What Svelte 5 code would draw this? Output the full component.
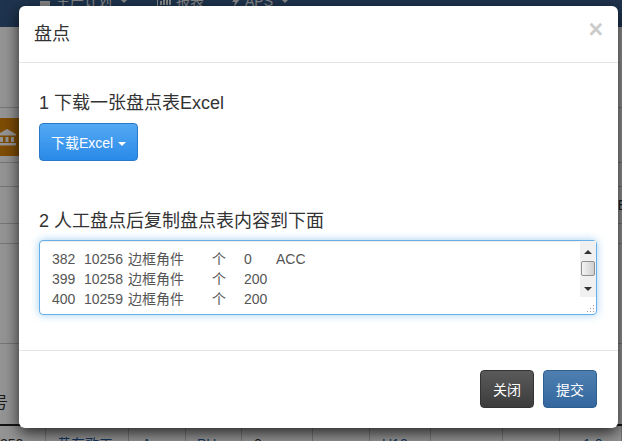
<script lang="ts">
	const rows = [
		{ id: '382', code: '10256', name: '边框角件', unit: '个', qty: '0', note: 'ACC' },
		{ id: '399', code: '10258', name: '边框角件', unit: '个', qty: '200', note: '' },
		{ id: '400', code: '10259', name: '边框角件', unit: '个', qty: '200', note: '' }
	];
	const cells = [
		{ text: '350', w: 46, pad: 0 },
		{ text: '黄东歌工', w: 83, pad: 11, link: true },
		{ text: 'A', w: 57, pad: 13, link: true },
		{ text: 'PH', w: 56, pad: 11, link: true },
		{ text: '0', w: 71, pad: 12 },
		{ text: '', w: 57, pad: 0 },
		{ text: 'U10', w: 61, pad: 12, link: true },
		{ text: '', w: 72, pad: 0 },
		{ text: '', w: 57, pad: 0 },
		{ text: '1.0', w: 62, pad: 23, link: true }
	];
</script>

<div class="page">
	<nav class="navbar">
		<span class="nav-item first">
			<svg viewBox="0 0 12 12" width="12" height="12"><path d="M6 0 L12 5 H0 Z M1 6 H11 V12 H1 Z" fill="currentColor" /></svg>
			生产计划
			<i class="nav-caret"></i>
		</span>
		<span class="nav-item">
			<svg viewBox="0 0 14 12" width="14" height="12"><path d="M0 0 H1 V11 H14 V12 H0 Z M3 6 H5 V10 H3 Z M6 3 H8 V10 H6 Z M9 5 H11 V10 H9 Z M12 1 H14 V10 H12 Z" fill="currentColor" /></svg>
			报表
		</span>
		<span class="nav-item">
			<svg viewBox="0 0 8 12" width="8" height="12"><path d="M5 0 L0 7 H3 L2 12 L8 4 H5 Z" fill="currentColor" /></svg>
			APS
			<i class="nav-caret"></i>
		</span>
	</nav>
	<div class="content">
		<div class="line" style="height: 81px"></div>
		<div class="gap" style="height: 10px"></div>
		<div class="band">
			<svg class="bank" viewBox="0 0 20 20" width="20" height="20">
				<path d="M10 2 L19 7 V8.5 H1 V7 Z M3 10 H6 V15 H3 Z M8.5 10 H11.5 V15 H8.5 Z M14 10 H17 V15 H14 Z M1 16 H19 V18.5 H1 Z" fill="#fff" />
			</svg>
		</div>
		<div class="line" style="height: 7px"></div>
		<div class="line" style="height: 24px"></div>
		<div class="line edge-row" style="height: 37px"><span class="edge">E</span></div>
		<div class="line" style="height: 20px"></div>
		<div class="line" style="height: 100px"></div>
		<div class="th">号</div>
		<div class="tr">
			{#each cells as c}
				<span class="td" class:link={c.link} style="width: {c.w}px; padding-left: {c.pad}px">{c.text}</span>
			{/each}
		</div>
	</div>
</div>

<div class="backdrop"></div>

<div class="modal">
	<header class="modal-header">
		<h3>盘点</h3>
		<span class="close">×</span>
	</header>
	<div class="modal-body">
		<h4>1 下载一张盘点表Excel</h4>
		<button class="btn btn-download">下载Excel <i class="caret"></i></button>
		<h4 class="second">2 人工盘点后复制盘点表内容到下面</h4>
		<div class="textarea">
			<div class="lines">
				{#each rows as r}
					<div class="row">
						<span>{r.id}</span>
						<span>{r.code}</span>
						<span>{r.name}</span>
						<span>{r.unit}</span>
						<span>{r.qty}</span>
						<span>{r.note}</span>
					</div>
				{/each}
			</div>
			<div class="scrollbar">
				<svg viewBox="0 0 8 4" width="8" height="4"><path d="M0 4 L4 0 L8 4 Z" fill="#333" /></svg>
				<div class="thumb"></div>
				<svg viewBox="0 0 8 4" width="8" height="4"><path d="M0 0 L4 4 L8 0 Z" fill="#333" /></svg>
			</div>
			<svg class="grip" viewBox="0 0 9 9" width="9" height="9">
				<path d="M7 1h1v1H7z M4 4h1v1H4z M7 4h1v1H7z M1 7h1v1H1z M4 7h1v1H4z M7 7h1v1H7z" fill="#999" />
			</svg>
		</div>
	</div>
	<footer class="modal-footer">
		<button class="btn btn-close">关闭</button>
		<button class="btn btn-submit">提交</button>
	</footer>
</div>

<style>
	:global(body) {
		margin: 0;
		overflow: hidden;
		font-family: "Liberation Sans", "Noto Sans CJK SC", sans-serif;
	}

	.page {
		width: 622px;
		height: 441px;
		overflow: hidden;
		background: #fff;
		font-size: 14px;
		color: #333;
	}

	.navbar {
		height: 27px;
		display: flex;
		align-items: flex-end;
		padding-left: 39px;
		box-sizing: border-box;
		background: #345885;
		color: #e8e8e8;
		line-height: 16px;
		overflow: hidden;
	}

	.nav-item {
		display: flex;
		align-items: center;
		gap: 5px;
		margin-bottom: 18px;
		margin-right: 28px;
		white-space: nowrap;
	}

	.nav-item.first {
		margin-right: 29px;
	}

	.nav-caret {
		width: 0;
		height: 0;
		margin-left: 3px;
		border-top: 4px solid currentColor;
		border-left: 4px solid transparent;
		border-right: 4px solid transparent;
	}

	.line {
		box-sizing: border-box;
		border-bottom: 1px solid #ccc;
	}

	.band {
		width: 300px;
		height: 38px;
		background: #d78309;
		display: flex;
		align-items: center;
	}

	.bank {
		margin-left: -3px;
	}

	.edge-row {
		display: flex;
		justify-content: flex-end;
		align-items: center;
	}

	.edge {
		margin-right: -5px;
	}

	.th {
		height: 82px;
		box-sizing: border-box;
		padding-top: 47px;
		border-bottom: 2px solid #222;
		font-size: 16px;
		line-height: 24px;
		margin-left: -8px;
	}

	.tr {
		display: flex;
		height: 30px;
	}

	.td {
		flex: none;
		box-sizing: border-box;
		height: 30px;
		padding-top: 8px;
		line-height: 20px;
		border-right: 1px solid #ccc;
		white-space: nowrap;
		overflow: hidden;
	}

	.td.link {
		color: #1f5fa8;
	}

	.backdrop {
		position: absolute;
		inset: 0;
		width: 622px;
		height: 441px;
		background: rgba(0, 0, 0, 0.42);
	}

	.modal {
		position: absolute;
		left: 19px;
		top: 6px;
		width: 599px;
		height: 422px;
		background: #fff;
		border-radius: 6px;
		box-shadow: 0 5px 15px rgba(0, 0, 0, 0.75);
		display: flex;
		flex-direction: column;
		color: #333;
	}

	.modal-header {
		height: 57px;
		box-sizing: border-box;
		border-bottom: 1px solid #e5e5e5;
		display: flex;
		align-items: center;
		justify-content: space-between;
		padding: 0 15px;
	}

	h3 {
		margin: 0;
		font-size: 18px;
		font-weight: 400;
		line-height: 24px;
	}

	.close {
		font-size: 25px;
		font-weight: 700;
		color: #000;
		opacity: 0.2;
		line-height: 1;
		margin-top: -10px;
		margin-right: 0;
	}

	.modal-body {
		flex: 1;
		padding: 27px 21px 0 20px;
	}

	h4 {
		margin: 0;
		font-size: 18px;
		font-weight: 400;
		line-height: 26px;
	}

	h4.second {
		margin-top: 47px;
	}

	.btn {
		box-sizing: border-box;
		font-family: inherit;
		font-size: 14px;
		color: #fff;
		border-radius: 4px;
		padding: 0 0 1px;
		cursor: pointer;
	}

	.btn-download {
		display: block;
		width: 99px;
		height: 38px;
		margin-top: 7px;
		background: linear-gradient(to bottom, #54a9f3, #2a8ae8);
		border: 1px solid #2a78c8;
	}

	.caret {
		display: inline-block;
		width: 0;
		height: 0;
		margin-left: 1px;
		vertical-align: middle;
		border-top: 4px solid #fff;
		border-left: 4px solid transparent;
		border-right: 4px solid transparent;
	}

	.textarea {
		position: relative;
		box-sizing: border-box;
		width: 558px;
		height: 75px;
		margin-top: 6px;
		display: flex;
		justify-content: space-between;
		border: 1px solid #66afe9;
		border-radius: 4px;
		box-shadow: inset 0 1px 1px rgba(0, 0, 0, 0.075), 0 0 8px rgba(102, 175, 233, 0.6);
		background: #fff;
		color: #555;
		font-size: 14px;
		line-height: 20px;
	}

	.lines {
		padding: 8px 0 0 12px;
	}

	.row {
		display: grid;
		grid-template-columns: 32px 44px 84px 32px 32px auto;
		height: 20px;
		white-space: pre;
	}

	.scrollbar {
		width: 16px;
		height: 56px;
		display: flex;
		flex-direction: column;
		align-items: center;
		justify-content: space-between;
		padding: 9px 0 6px;
		box-sizing: border-box;
		background: #f0f0f0;
	}

	.thumb {
		width: 14px;
		height: 15px;
		box-sizing: border-box;
		border: 1px solid #8e8f8f;
		border-radius: 2px;
		background: linear-gradient(to right, #f4f4f4, #cfcfcf);
		margin-top: -2px;
		margin-bottom: 3px;
	}

	.grip {
		position: absolute;
		right: 1px;
		bottom: 1px;
	}

	.modal-footer {
		height: 78px;
		box-sizing: border-box;
		border-top: 1px solid #e5e5e5;
		display: flex;
		justify-content: flex-end;
		gap: 9px;
		padding: 19px 21px 0 0;
	}

	.btn-close,
	.btn-submit {
		width: 54px;
		height: 38px;
	}

	.btn-close {
		background: linear-gradient(to bottom, #5a5a5a, #3c3c3c);
		border: 1px solid #333;
	}

	.btn-submit {
		background: linear-gradient(to bottom, #4f7fb0, #33679e);
		border: 1px solid #2f5f90;
	}
</style>
